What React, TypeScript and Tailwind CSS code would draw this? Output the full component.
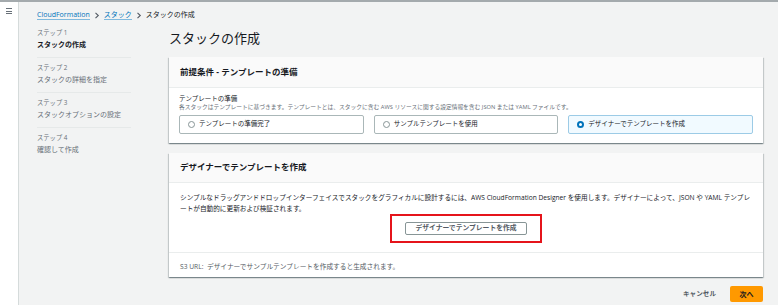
import React from 'react';

const steps = [
  { label: 'ステップ 1', name: 'スタックの作成', active: true },
  { label: 'ステップ 2', name: 'スタックの詳細を指定', active: false },
  { label: 'ステップ 3', name: 'スタックオプションの設定', active: false },
  { label: 'ステップ 4', name: '確認して作成', active: false },
];

const options = [
  { text: 'テンプレートの準備完了', selected: false },
  { text: 'サンプルテンプレートを使用', selected: false },
  { text: 'デザイナーでテンプレートを作成', selected: true },
];

const panelShadow =
  'shadow-[0_1px_1px_0_rgba(0,28,36,0.3),1px_1px_1px_0_rgba(0,28,36,0.15),-1px_1px_1px_0_rgba(0,28,36,0.15)]';

const Chevron = () => (
  <svg width="6" height="7" viewBox="0 0 6 7" className="mx-[4px]">
    <path d="M1.5 0.8 L4.3 3.5 L1.5 6.2" fill="none" stroke="#545b64" strokeWidth="1.1" />
  </svg>
);

const App = () => {
  return (
    <div className="w-[778px] h-[305px] overflow-hidden bg-[#f2f3f3] border-t-2 border-[#a4aaad] flex font-['Open_Sans','Noto_Sans_CJK_JP',sans-serif] text-[#16191f] leading-none">
      {/* Side strip */}
      <div className="w-[19px] shrink-0 bg-white border-r border-[#d5dbdb] pt-[5px] flex justify-center">
        <div className="flex flex-col gap-[1.5px] w-[6px] mt-[1px]">
          <span className="h-[1px] bg-[#687078]" />
          <span className="h-[1px] bg-[#687078]" />
          <span className="h-[1px] bg-[#687078]" />
        </div>
      </div>

      <div className="flex-1 pl-[18px] pr-[15px]">
        {/* Breadcrumb */}
        <div className="h-[12px] mt-[7px] flex items-center text-[7px] leading-[12px]">
          <span className="text-[#0073bb] border-b border-[#7fb9dd] leading-[9px]">CloudFormation</span>
          <Chevron />
          <span className="text-[#0073bb] border-b border-[#7fb9dd] leading-[9px]">スタック</span>
          <Chevron />
          <span className="text-[#16191f]">スタックの作成</span>
        </div>

        <div className="flex mt-[7px] gap-[38px]">
          {/* Steps */}
          <div className="w-[94px] shrink-0">
            {steps.map((s, i) => (
              <div key={s.label}>
                <div className={i === 0 ? 'pb-[6px]' : 'pt-[5px] pb-[6px]'}>
                  <div className="text-[6.3px] leading-[10px] text-[#687078]">{s.label}</div>
                  <div
                    className={
                      s.active
                        ? 'mt-[1px] text-[7px] leading-[12px] font-bold text-[#16191f] whitespace-nowrap'
                        : 'mt-[1px] text-[7px] leading-[12px] text-[#687078] whitespace-nowrap'
                    }
                  >
                    {s.name}
                  </div>
                </div>
                {i < steps.length - 1 && <div className="h-px bg-[#e6e9e9]" />}
              </div>
            ))}
          </div>

          {/* Content */}
          <div className="flex-1">
            <h1 className="text-[13px] leading-[20px] text-[#16191f]">スタックの作成</h1>

            {/* Panel 1 */}
            <div className={`mt-[9px] bg-white ${panelShadow}`}>
              <div className="h-[31px] bg-[#fafafa] border-b border-[#eaeded] px-[11px] flex items-center">
                <span className="text-[8.5px] font-bold">前提条件 - テンプレートの準備</span>
              </div>
              <div className="px-[10px] pt-[6px] pb-[9px]">
                <div className="text-[6.5px] leading-[10px] text-[#16191f]">テンプレートの準備</div>
                <div className="text-[5.75px] leading-[7px] text-[#687078] whitespace-nowrap">
                  各スタックはテンプレートに基づきます。テンプレートとは、スタックに含む AWS リソースに関する設定情報を含む JSON または YAML ファイルです。
                </div>
                <div className="mt-[4px] grid grid-cols-3 gap-[10px]">
                  {options.map((o) => (
                    <div
                      key={o.text}
                      className={
                        o.selected
                          ? 'h-[19px] rounded-[2px] border border-[#9ccbe6] bg-[#f1faff] flex items-center pl-[8px]'
                          : 'h-[19px] rounded-[2px] border border-[#aab7b8] bg-white flex items-center pl-[8px]'
                      }
                    >
                      <span
                        className={
                          o.selected
                            ? 'w-[7px] h-[7px] rounded-full border-[2px] border-[#0073bb] bg-white'
                            : 'w-[7px] h-[7px] rounded-full border border-[#879596] bg-white'
                        }
                      />
                      <span className="ml-[4px] text-[6.5px] text-[#16191f]">{o.text}</span>
                    </div>
                  ))}
                </div>
              </div>
            </div>

            {/* Panel 2 */}
            <div className={`mt-[10px] bg-white ${panelShadow}`}>
              <div className="h-[30px] bg-[#fafafa] border-b border-[#eaeded] px-[11px] flex items-center">
                <span className="text-[8.5px] font-bold">デザイナーでテンプレートを作成</span>
              </div>
              <div className="px-[11px] pt-[9px] pb-[9px] border-b border-[#eaeded]">
                <div className="text-[6.65px] leading-[11px] text-[#16191f]">
                  <div className="whitespace-nowrap">
                    シンプルなドラッグアンドドロップインターフェイスでスタックをグラフィカルに設計するには、AWS CloudFormation Designer を使用します。デザイナーによって、JSON や YAML テンプレ
                  </div>
                  <div>ートが自動的に更新および検証されます。</div>
                </div>
                <div className="flex justify-center">
                  <div className="flex border-2 border-[#e5141b] px-[13px] py-[6px]">
                    <button className="block w-[122px] h-[13px] border border-[#879596] rounded-[2px] bg-white text-[6.8px] font-bold text-[#545b64] leading-none">
                      デザイナーでテンプレートを作成
                    </button>
                  </div>
                </div>
              </div>
              <div className="px-[11px] pt-[9px] pb-[5px] text-[6.7px] leading-[10px] text-[#545b64]">
                S3 URL:&nbsp;&nbsp;デザイナーでサンプルテンプレートを作成すると生成されます。
              </div>
            </div>

            {/* Footer */}
            <div className="mt-[9px] flex justify-end items-center gap-[14px]">
              <span className="text-[6.6px] font-bold text-[#545b64]">キャンセル</span>
              <button className="w-[33px] h-[16px] bg-[#ff9900] text-[7px] font-bold text-[#16191f] rounded-[2px]">
                次へ
              </button>
            </div>
          </div>
        </div>
      </div>
    </div>
  );
};

export default App;
